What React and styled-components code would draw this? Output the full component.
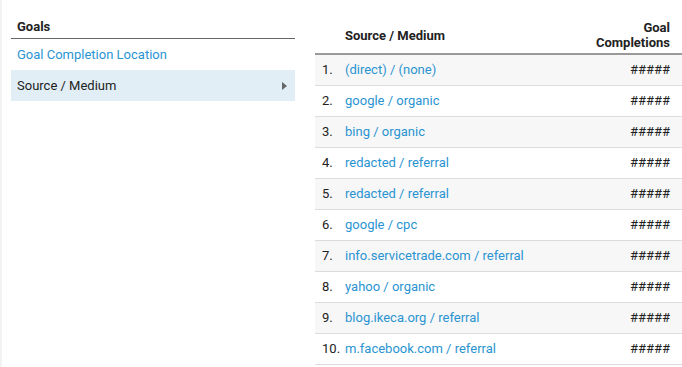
import React from 'react'
import styled, { createGlobalStyle } from 'styled-components'

const GlobalStyle = createGlobalStyle`
  body {
    margin: 0;
    background: #fff;
    font-family: Roboto, 'Liberation Sans', sans-serif;
  }
`

const rows = [
  '(direct) / (none)',
  'google / organic',
  'bing / organic',
  'redacted / referral',
  'redacted / referral',
  'google / cpc',
  'info.servicetrade.com / referral',
  'yahoo / organic',
  'blog.ikeca.org / referral',
  'm.facebook.com / referral',
]

const Report = () => {
  return (
    <Page>
      <GlobalStyle />
      <Side>
        <SideTitle>Goals</SideTitle>
        <SideItem>Goal Completion Location</SideItem>
        <SideItem $active>
          Source / Medium
          <Caret />
        </SideItem>
      </Side>
      <Table>
        <thead>
          <tr>
            <Th />
            <Th>Source / Medium</Th>
            <Th $right>Goal<br />Completions</Th>
          </tr>
        </thead>
        <tbody>
          {rows.map((r, i) => (
            <Row key={i} $odd={i % 2 === 0}>
              <Num>{i + 1}.</Num>
              <LinkCell>{r}</LinkCell>
              <Value>#####</Value>
            </Row>
          ))}
        </tbody>
      </Table>
    </Page>
  )
}

const Page = styled.div`
  display: flex;
  align-items: flex-start;
  height: 367px;
  box-sizing: border-box;
  border-left: 2px solid #f2f2f2;
  padding-left: 9px;
  overflow: hidden;
`

const Side = styled.div`
  width: 284px;
  flex-shrink: 0;
  padding-top: 19px;
`

const SideTitle = styled.div`
  font-size: 13px;
  font-weight: 700;
  color: #222;
  padding: 0 0 3px 6px;
  height: 16px;
  border-bottom: 1px solid #666;
`

const SideItem = styled.div`
  display: flex;
  align-items: center;
  justify-content: space-between;
  height: 31px;
  padding: 0 8px 0 6px;
  font-size: 13px;
  color: ${p => (p.$active ? '#222' : '#2a94d2')};
  background: ${p => (p.$active ? '#e1eef6' : 'transparent')};
`

const Caret = styled.span`
  width: 0;
  height: 0;
  border-top: 4px solid transparent;
  border-bottom: 4px solid transparent;
  border-left: 5px solid #666;
`

const Table = styled.table`
  margin-left: 20px;
  flex: 1;
  border-collapse: collapse;
  margin-top: 20px;
  font-size: 13px;
`

const Th = styled.th`
  font-weight: 700;
  color: #222;
  text-align: ${p => (p.$right ? 'right' : 'left')};
  padding: 0 12px 3px 0;
  line-height: 15px;
  vertical-align: middle;
  border-bottom: 2px solid #9a9a9a;
  &:first-child {
    width: 30px;
    padding: 0;
  }
`

const Row = styled.tr`
  height: 31px;
  background: ${p => (p.$odd ? '#f7f7f7' : '#fff')};
  border-bottom: 1px solid #dcdcdc;
`

const Num = styled.td`
  color: #222;
  padding: 0 0 0 7px;
  white-space: nowrap;
`

const LinkCell = styled.td`
  color: #2a94d2;
  padding: 0;
`

const Value = styled.td`
  color: #222;
  text-align: right;
  padding: 0 12px 0 0;
`

export default Report
